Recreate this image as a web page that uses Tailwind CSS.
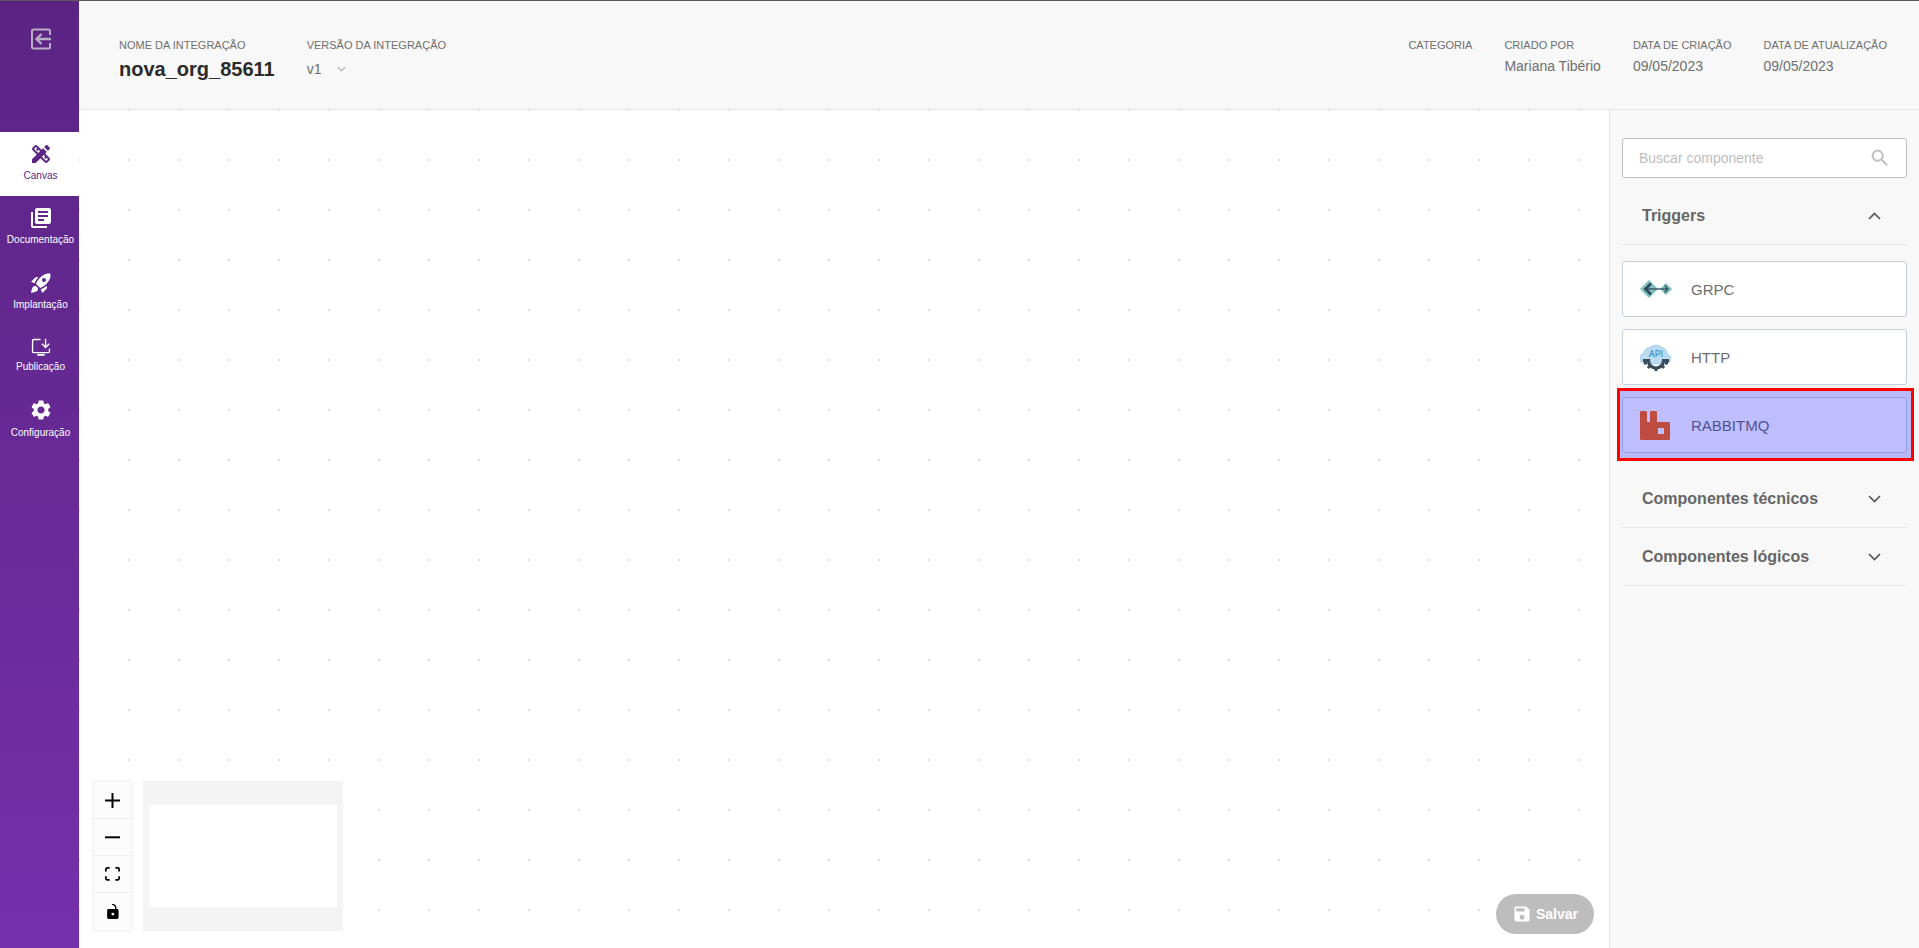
<!DOCTYPE html>
<html>
  <head>
    <meta charset="utf-8">
    <title>Canvas</title>
    <script src="https://cdn.jsdelivr.net/npm/@tailwindcss/browser@4"></script>
  </head>
  <body class="flex w-screen h-screen overflow-hidden border-t border-[#5a5a5a] bg-white font-['Liberation_Sans',sans-serif]">
    <!-- sidebar -->
    <nav class="flex flex-col w-[79px] shrink-0 text-white bg-gradient-to-b from-[#5b2484] to-[#7530aa]">
      <div class="flex justify-center h-[131px] pt-[27px] pl-[2px]">
        <svg class="w-[22px] h-[22px]" viewBox="0 0 22 22" fill="none" stroke="#b9aec4" stroke-width="2"><path d="M20 7V3a1.5 1.5 0 0 0-1.5-1.5h-15A1.5 1.5 0 0 0 2 3v16a1.5 1.5 0 0 0 1.5 1.5h15A1.5 1.5 0 0 0 20 19v-4"/><path d="M21 11H7M11.5 6l-5 5 5 5" stroke-width="2.4"/></svg>
      </div>
      <a class="flex flex-col items-center h-[64px] pt-[10px] pl-[2px] bg-white text-[#5b2484]">
        <svg class="w-6 h-6" viewBox="0 0 24 24" fill="currentColor"><path d="M16.24 11.51l1.57-1.57-3.75-3.75-1.57 1.57-4.14-4.13c-.78-.78-2.05-.78-2.83 0l-1.9 1.9c-.78.78-.78 2.05 0 2.83l4.13 4.13L3 17.25V21h3.75l4.76-4.76 4.13 4.13c.95.95 2.23.6 2.83 0l1.9-1.9c.78-.78.78-2.05 0-2.83l-4.13-4.13zm-7.06-.44L5.04 6.94l1.89-1.9L8.2 6.31 7.02 7.5l1.41 1.41 1.19-1.19 1.45 1.45-1.89 1.9zm7.88 7.89l-4.13-4.14 1.9-1.9 1.45 1.45-1.19 1.19 1.41 1.41 1.19-1.19 1.27 1.27-1.9 1.91zM20.71 7.04c.39-.39.39-1.02 0-1.41l-2.34-2.34c-.47-.47-1.12-.29-1.41 0l-1.83 1.83 3.75 3.75 1.83-1.83z"/></svg>
        <span class="text-[10px] leading-[12px] mt-[4px]">Canvas</span>
      </a>
      <a class="flex flex-col items-center h-[64px] pt-[10px] pl-[2px]">
        <svg class="w-6 h-6" viewBox="0 0 24 24" fill="currentColor"><path d="M4 6H2v14c0 1.1.9 2 2 2h14v-2H4V6zm16-4H8c-1.1 0-2 .9-2 2v12c0 1.1.9 2 2 2h12c1.1 0 2-.9 2-2V4c0-1.1-.9-2-2-2zm-1 9H9V9h10v2zm-4 4H9v-2h6v2zm4-8H9V5h10v2z"/></svg>
        <span class="text-[10px] leading-[12px] mt-[4px] whitespace-nowrap">Documentação</span>
      </a>
      <a class="flex flex-col items-center h-[64px] pt-[11px] pl-[2px]">
        <svg class="w-6 h-6" viewBox="0 0 24 24" fill="currentColor"><path d="M9.19 6.35c-2.04 2.29-3.44 5.58-3.57 5.89L2 10.69l4.05-4.05c.47-.47 1.15-.68 1.81-.55l1.33.26zM11.17 17s3.74-1.55 5.89-3.7c5.4-5.4 4.5-9.62 4.21-10.57-.95-.3-5.17-1.19-10.57 4.21C8.55 9.09 7 12.83 7 12.83L11.17 17zm6.48-2.19c-2.29 2.04-5.58 3.44-5.89 3.57L13.31 22l4.05-4.05c.47-.47.68-1.15.55-1.81l-.26-1.33zM9 18c0 .83-.34 1.58-.88 2.12C6.94 21.3 2 22 2 22s.7-4.94 1.88-6.12C4.42 15.34 5.17 15 6 15c1.66 0 3 1.34 3 3zm4-9c0-1.1.9-2 2-2s2 .9 2 2-.9 2-2 2-2-.9-2-2z"/></svg>
        <span class="text-[10px] leading-[12px] mt-[4px]">Implantação</span>
      </a>
      <a class="flex flex-col items-center h-[66px] pt-[12px] pl-[2px]">
        <svg class="w-[22px] h-[22px]" viewBox="0 0 24 24" fill="none" stroke="currentColor" stroke-width="1.5"><path d="M11.5 3.8H4.2A1.4 1.4 0 0 0 2.8 5.2v11.6a1.4 1.4 0 0 0 1.4 1.4h15.6a1.4 1.4 0 0 0 1.4-1.4v-3"/><path d="M8 20.6h8" stroke-width="2"/><path d="M17 3v9M13 8.5l4 4 4-4"/></svg>
        <span class="text-[10px] leading-[12px] mt-[3px]">Publicação</span>
      </a>
      <a class="flex flex-col items-center pt-[8px] pl-[2px]">
        <svg class="w-6 h-6" viewBox="0 0 24 24" fill="currentColor"><path d="M19.14 12.94c.04-.3.06-.61.06-.94 0-.32-.02-.64-.07-.94l2.03-1.58c.18-.14.23-.41.12-.61l-1.92-3.32c-.12-.22-.37-.29-.59-.22l-2.39.96c-.5-.38-1.03-.7-1.62-.94l-.36-2.54c-.04-.24-.24-.41-.48-.41h-3.84c-.24 0-.43.17-.47.41l-.36 2.54c-.59.24-1.13.57-1.62.94l-2.39-.96c-.22-.08-.47 0-.59.22L2.74 8.87c-.12.21-.08.47.12.61l2.03 1.58c-.05.3-.09.63-.09.94s.02.64.07.94l-2.03 1.58c-.18.14-.23.41-.12.61l1.92 3.32c.12.22.37.29.59.22l2.39-.96c.5.38 1.03.7 1.62.94l.36 2.54c.05.24.24.41.48.41h3.84c.24 0 .44-.17.47-.41l.36-2.54c.59-.24 1.13-.56 1.62-.94l2.39.96c.22.08.47 0 .59-.22l1.92-3.32c.12-.22.07-.47-.12-.61l-2.01-1.58zM12 15.6c-1.98 0-3.6-1.62-3.6-3.6s1.62-3.6 3.6-3.6 3.6 1.62 3.6 3.6-1.62 3.6-3.6 3.6z"/></svg>
        <span class="text-[10px] leading-[12px] mt-[5px]">Configuração</span>
      </a>
    </nav>

    <div class="flex flex-col flex-1 min-w-0">
      <!-- header -->
      <header class="flex justify-between h-[109px] shrink-0 pl-[40px] pr-[32px] pt-[38px] bg-[#f8f8f8] border-b border-[#e6e6e6]">
        <div class="flex gap-[32px]">
          <div>
            <p class="text-[11px] leading-[13px] text-[#6f6f6f]">NOME DA INTEGRAÇÃO</p>
            <p class="mt-[4px] text-[20px] leading-[26px] font-bold text-[#2b2b2b]">nova_org_85611</p>
          </div>
          <div>
            <p class="text-[11px] leading-[13px] text-[#6f6f6f]">VERSÃO DA INTEGRAÇÃO</p>
            <div class="flex items-center gap-[16px] mt-[8px] text-[14px] leading-[18px] text-[#6f6f6f]">
              v1
              <svg class="w-[9px] h-[6px]" viewBox="0 0 9 6" fill="none" stroke="#bdbdbd" stroke-width="1.5"><path d="M.7 1l3.8 3.8L8.3 1"/></svg>
            </div>
          </div>
        </div>
        <div class="flex gap-[32px]">
          <p class="text-[11px] leading-[13px] text-[#6f6f6f]">CATEGORIA</p>
          <div>
            <p class="text-[11px] leading-[13px] text-[#6f6f6f]">CRIADO POR</p>
            <p class="mt-[5px] text-[14px] leading-[18px] text-[#6f6f6f]">Mariana Tibério</p>
          </div>
          <div>
            <p class="text-[11px] leading-[13px] text-[#6f6f6f]">DATA DE CRIAÇÃO</p>
            <p class="mt-[5px] text-[14px] leading-[18px] text-[#6f6f6f]">09/05/2023</p>
          </div>
          <div>
            <p class="text-[11px] leading-[13px] text-[#6f6f6f]">DATA DE ATUALIZAÇÃO</p>
            <p class="mt-[5px] text-[14px] leading-[18px] text-[#6f6f6f]">09/05/2023</p>
          </div>
        </div>
      </header>

      <div class="flex flex-1 min-h-0">
        <!-- canvas -->
        <main class="relative flex-1 min-w-0 bg-white bg-[radial-gradient(circle_at_center,#dcdcdc_1px,transparent_1.2px)] bg-[length:50px_50px] bg-[position:25px_-25px]">
          <div class="absolute left-[15px] bottom-[18px] flex flex-col w-[37px] bg-[#fcfcfc] shadow-[0_0_2px_1px_rgba(0,0,0,0.08)]">
            <button class="flex items-center justify-center h-[37px] border-b border-[#eeeeee]"><svg class="w-[15px] h-[15px]" viewBox="0 0 32 32"><path d="M32 18.133H18.133V32h-4.266V18.133H0v-4.266h13.867V0h4.266v13.867H32z"/></svg></button>
            <button class="flex items-center justify-center h-[37px] border-b border-[#eeeeee]"><svg class="w-[15px] h-[3px]" viewBox="0 0 32 5"><path d="M0 0h32v4.2H0z"/></svg></button>
            <button class="flex items-center justify-center h-[37px] border-b border-[#eeeeee]"><svg class="w-[15px] h-[14px]" viewBox="0 0 32 30"><path d="M3.692 4.63c0-.53.4-.938.939-.938h5.215V0H4.708C2.13 0 0 2.054 0 4.63v5.216h3.692V4.631zM27.354 0h-5.2v3.692h5.17c.53 0 .984.4.984.939v5.215H32V4.631A4.624 4.624 0 0027.354 0zm.954 24.83c0 .532-.4.94-.939.94h-5.215v3.768h5.215c2.577 0 4.631-2.13 4.631-4.707v-5.139h-3.692v5.139zm-23.677.94c-.531 0-.939-.4-.939-.94v-5.138H0v5.139c0 2.577 2.13 4.707 4.708 4.707h5.138V25.77H4.631z"/></svg></button>
            <button class="flex items-center justify-center h-[37px]"><svg class="w-[12px] h-[15px]" viewBox="0 0 25 32"><path d="M21.333 10.667H19.81V7.619C19.81 3.429 16.38 0 12.19 0c-4.114 1.828-1.37 2.133.305 2.438 1.676.305 4.42 2.59 4.42 5.181v3.048H3.047A3.056 3.056 0 000 13.714v15.238A3.056 3.056 0 003.048 32h18.285a3.056 3.056 0 003.048-3.048V13.714a3.056 3.056 0 00-3.048-3.047zM12.19 24.533a3.056 3.056 0 01-3.047-3.047 3.056 3.056 0 013.047-3.048 3.056 3.056 0 013.048 3.048 3.056 3.056 0 01-3.048 3.047z"/></svg></button>
          </div>
          <!-- minimap -->
          <div class="absolute left-[64px] bottom-[17px] flex items-center justify-center w-[200px] h-[150px] bg-[#f4f4f4]">
            <div class="w-[188px] h-[102px] bg-white"></div>
          </div>
          <button class="absolute right-[15px] bottom-[14px] flex items-center justify-center gap-[4px] w-[98px] h-[40px] rounded-full bg-[#bdbdbd] text-white text-[14px] font-bold">
            <svg class="w-[20px] h-[20px]" viewBox="0 0 24 24" fill="currentColor"><path d="M17 3H5c-1.11 0-2 .9-2 2v14c0 1.1.89 2 2 2h14c1.1 0 2-.9 2-2V7l-4-4zm-5 16c-1.66 0-3-1.34-3-3s1.34-3 3-3 3 1.34 3 3-1.34 3-3 3zm3-10H5V5h10v4z"/></svg>
            Salvar
          </button>
        </main>

        <!-- component panel -->
        <aside class="relative flex flex-col w-[310px] shrink-0 pt-[28px] pl-[12px] pr-[12px] bg-[#f8f8f8] border-l border-[#e6e6e6]">
          <div class="flex items-center justify-between h-[40px] pl-[16px] pr-[15px] bg-white border border-[#bdbdbd] rounded-[3px]">
            <span class="text-[14px] text-[#bdbdbd]">Buscar componente</span>
            <svg class="w-[22px] h-[22px]" viewBox="0 0 24 24" fill="#bdbdbd"><path d="M15.5 14h-.79l-.28-.27C15.41 12.59 16 11.11 16 9.5 16 5.91 13.09 3 9.5 3S3 5.91 3 9.5 5.91 16 9.5 16c1.61 0 3.09-.59 4.23-1.57l.27.28v.79l5 4.99L20.49 19l-4.99-5zm-6 0C7.01 14 5 11.99 5 9.5S7.01 5 9.5 5 14 7.01 14 9.5 11.99 14 9.5 14z"/></svg>
          </div>
          <div class="flex items-center justify-between h-[67px] pt-[9px] pl-[20px] pr-[26px] mb-[16px] border-b border-[#e6e6e6] text-[16px] font-bold text-[#666666]">
            Triggers
            <svg class="w-[13px] h-[8px]" viewBox="0 0 13 8" fill="none" stroke="#555555" stroke-width="1.7"><path d="M1 7l5.5-5.5L12 7"/></svg>
          </div>
          <div class="flex flex-col gap-[12px]">
            <div class="flex items-center h-[56px] pl-[17px] bg-white border border-[#c5cede] rounded-[3px] text-[15px] text-[#6e6e6e]">
              <svg class="w-[32px] h-[20px] mr-[19px]" viewBox="0 0 32 20">
                <path d="M0 10l9-9 9 9-9 9z" fill="#7fc2bd"/><path d="M20 10l6-6 6 6-6 6z" fill="#7fc2bd"/>
                <path d="M11 4.5L5.5 10l5.5 5.5" fill="none" stroke="#2f4a5c" stroke-width="2.8"/><path d="M6 10h22" stroke="#2f4a5c" stroke-width="1.3"/><path d="M24.5 6.5L28 10l-3.5 3.5" fill="none" stroke="#2f4a5c" stroke-width="1.3"/>
              </svg>
              <span class="pt-[2px]">GRPC</span>
            </div>
            <div class="flex items-center h-[56px] pl-[17px] bg-white border border-[#c5cede] rounded-[3px] text-[15px] text-[#6e6e6e]">
              <svg class="w-[32px] h-[28px] mr-[19px]" viewBox="0 0 32 28">
                <path d="M5.5 21A5.5 5.5 0 0 1 4 10.2 7 7 0 0 1 11 4a8 8 0 0 1 11 .5 6.5 6.5 0 0 1 5 6A5.5 5.5 0 0 1 26.5 21z" fill="#bcdcf2" stroke="#9bcbed" stroke-width=".8"/>
                <path d="M3 17.5h5.5a7.5 7.5 0 0 0 15 0H29" fill="none" stroke="#3b4b57" stroke-width="3.2"/>
                <path d="M8 25l2.5-3M24 25l-2.5-3M16 28v-4M4 20l3 0M28 20l-3 0" stroke="#3b4b57" stroke-width="3"/>
                <text x="16" y="13.5" text-anchor="middle" font-size="9" font-family="Roboto, sans-serif" font-weight="500" fill="#3d97d6">API</text>
              </svg>
              <span class="pt-[2px]">HTTP</span>
            </div>
            <div class="flex items-center h-[56px] pl-[17px] bg-white border border-[#c5cede] rounded-[3px] text-[15px] text-[#6e6e6e]">
              <svg class="w-[30px] h-[29px] mr-[21px]" viewBox="0 0 30 29"><path fill-rule="evenodd" d="M1 0h5a1 1 0 0 1 1 1v10h3V1a1 1 0 0 1 1-1h5a1 1 0 0 1 1 1v10h12a1 1 0 0 1 1 1v16a1 1 0 0 1-1 1H1a1 1 0 0 1-1-1V1a1 1 0 0 1 1-1zM18 17v6h6v-6z" fill="#ff6600"/></svg>
              <span class="pt-[2px]">RABBITMQ</span>
            </div>
          </div>
          <div class="flex items-center justify-between h-[58px] mt-[17px] pl-[20px] pr-[26px] border-b border-[#e6e6e6] text-[16px] font-bold text-[#666666]">
            Componentes técnicos
            <svg class="w-[13px] h-[8px]" viewBox="0 0 13 8" fill="none" stroke="#555555" stroke-width="1.7"><path d="M1 1l5.5 5.5L12 1"/></svg>
          </div>
          <div class="flex items-center justify-between h-[58px] mx-[2px] pl-[18px] pr-[24px] border-b border-[#e6e6e6] text-[16px] font-bold text-[#666666]">
            Componentes lógicos
            <svg class="w-[13px] h-[8px]" viewBox="0 0 13 8" fill="none" stroke="#555555" stroke-width="1.7"><path d="M1 1l5.5 5.5L12 1"/></svg>
          </div>
          <!-- highlight over the RabbitMQ card -->
          <div class="absolute left-[7px] top-[278px] w-[297px] h-[73px] border-[3px] border-[#ff0000] bg-[#0000ff]/25"></div>
        </aside>
      </div>
    </div>
  </body>
</html>
